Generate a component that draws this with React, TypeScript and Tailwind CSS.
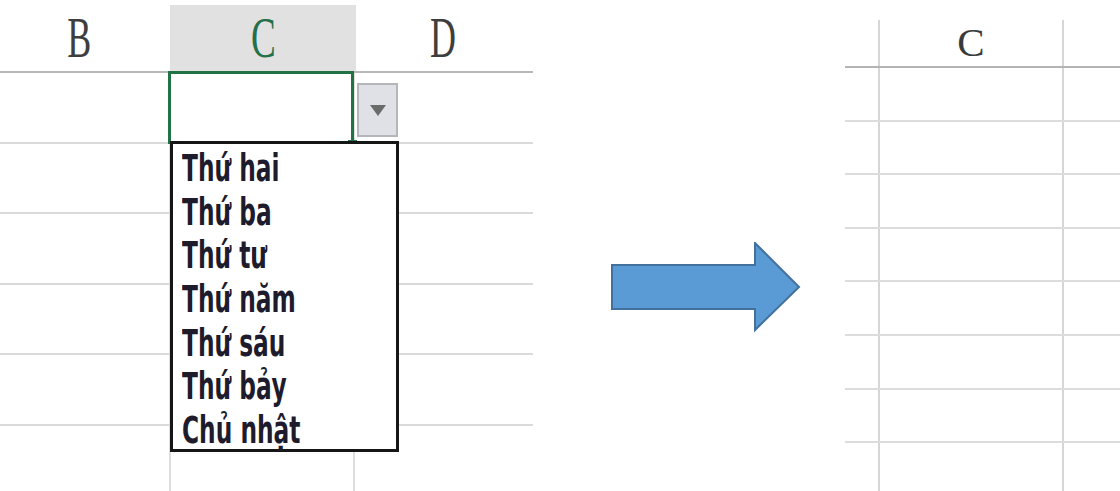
import React from "react";

const DAYS = ["Thứ hai", "Thứ ba", "Thứ tư", "Thứ năm", "Thứ sáu", "Thứ bảy", "Chủ nhật"];

const serif = { fontFamily: '"Liberation Serif", "DejaVu Serif", serif' };
const sans = { fontFamily: '"DejaVu Sans", "Liberation Sans", sans-serif' };

function LeftSheet() {
  return (
    <div className="w-[533px] shrink-0 flex flex-col">
      {/* column header */}
      <div className="pt-[5px] flex border-b-[2px] border-[#b9b9b9]" style={serif}>
        <div className="w-[170px] h-[66px] flex items-center justify-center pr-[12px] text-[#3e3e3e] text-[58px] leading-none">
          <span className="scale-x-[0.62] inline-block">B</span>
        </div>
        <div className="w-[186px] h-[66px] flex items-center justify-center bg-[#e1e1e1] text-[#24704a] text-[58px] leading-none">
          <span className="scale-x-[0.64] inline-block">C</span>
        </div>
        <div className="flex-1 h-[66px] flex items-center justify-center pr-[4px] text-[#3e3e3e] text-[58px] leading-none">
          <span className="scale-x-[0.62] inline-block">D</span>
        </div>
      </div>

      {/* body rows */}
      {[0, 1, 2, 3, 4, 5].map((i) => (
        <div key={i} className={`flex ${i < 5 ? "h-[70.6px] border-b-[2px] border-[#dadada]" : "flex-1"}`}>
          <div className="w-[171px] border-r-[2px] border-[#dedede]" />
          <div className="relative w-[184px] border-r-[2px] border-[#dedede]">
            {i === 0 && (
              <>
                <div className="absolute -left-[3px] -top-[2px] -right-[1px] -bottom-[2px] border-[3px] border-[#217346]" />
                <div className="absolute right-[-4px] bottom-[-4px] w-[9px] h-[6px] bg-[#217346]" />
                <div className="absolute left-[186px] top-[10px] w-[41px] h-[54px] bg-[#dfe1e6] border-[2px] border-[#b4b6ba] flex items-center justify-center">
                  <svg width="16" height="11" viewBox="0 0 16 11">
                    <polygon points="0,0 16,0 8,11" fill="#6b6b6b" />
                  </svg>
                </div>
                <div
                  className="absolute left-[-1px] top-[68px] z-10 w-[229px] h-[311px] bg-white border-[3px] border-[#161616] pl-[9px] pt-[3px]"
                  style={sans}
                >
                  {DAYS.map((d) => (
                    <div key={d} className="h-[43.7px] text-[37px] leading-[43.7px] font-bold text-[#1d1b2c] whitespace-nowrap">
                      <span className="inline-block origin-left scale-x-[0.63]">{d}</span>
                    </div>
                  ))}
                </div>
              </>
            )}
          </div>
          <div className="flex-1" />
        </div>
      ))}
    </div>
  );
}

function Arrow() {
  return (
    <div className="flex-1 pt-[242px] pl-[78px]">
      <svg width="192" height="92" viewBox="0 0 192 92">
        <polygon
          points="1,23 144,23 144,1 188,45 144,88 144,67 1,67"
          fill="#5b9bd5"
          stroke="#41719c"
          strokeWidth="2"
          strokeLinejoin="miter"
        />
      </svg>
    </div>
  );
}

function RightSheet() {
  return (
    <div className="w-[275px] shrink-0 pt-[20px] flex flex-col">
      <div className="flex h-[48px] border-b-[2px] border-[#b4b4b4]">
        <div className="w-[35px] border-r-[2px] border-[#d6d6d6]" />
        <div
          className="w-[184px] border-r-[2px] border-[#d6d6d6] flex items-center justify-center text-[41px] leading-none text-[#3a3a3a] pb-[2px]"
          style={serif}
        >
          C
        </div>
        <div className="flex-1" />
      </div>
      {[0, 1, 2, 3, 4, 5, 6, 7].map((i) => (
        <div key={i} className={`flex ${i < 7 ? "h-[53.6px] border-b-[2px] border-[#dcdcdc]" : "flex-1"}`}>
          <div className="w-[35px] border-r-[2px] border-[#d6d6d6]" />
          <div className="w-[184px] border-r-[2px] border-[#d6d6d6]" />
          <div className="flex-1" />
        </div>
      ))}
    </div>
  );
}

export default function App() {
  return (
    <div className="w-[1120px] h-[491px] bg-white flex overflow-hidden">
      <LeftSheet />
      <Arrow />
      <RightSheet />
    </div>
  );
}
